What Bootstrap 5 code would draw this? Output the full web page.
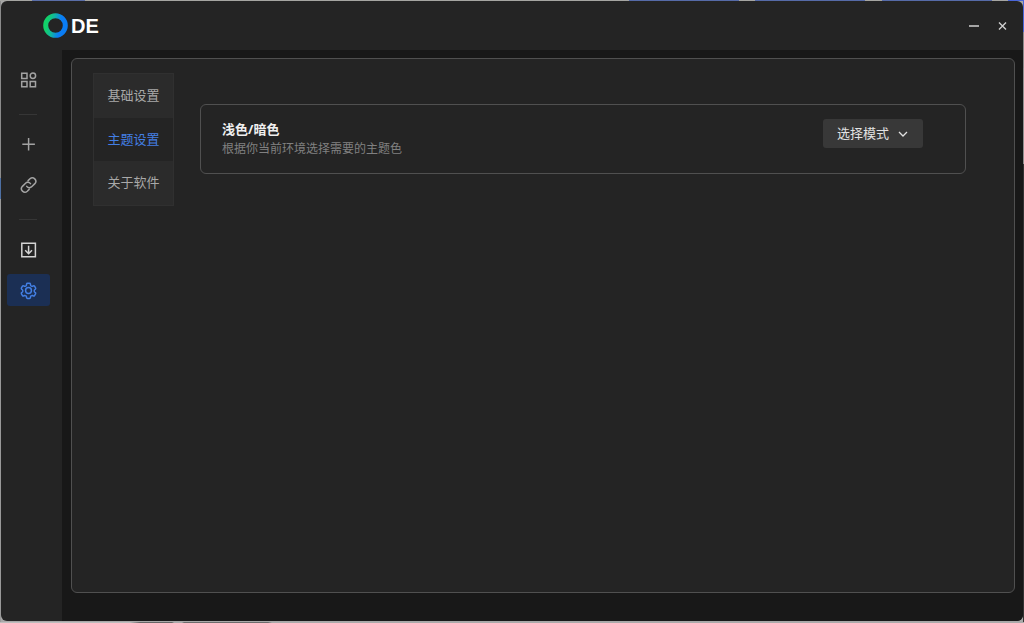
<!DOCTYPE html>
<html lang="zh-CN" data-bs-theme="dark">
<head>
<meta charset="utf-8">
<meta name="viewport" content="width=device-width, initial-scale=1">
<title>ODE 设置</title>
<link href="https://cdn.jsdelivr.net/npm/bootstrap@5.3.0/dist/css/bootstrap.min.css" rel="stylesheet">
<style>
  body {
    font-family: "Noto Sans", "Noto Sans CJK SC", sans-serif;
    font-size: 13px;
    line-height: 20px;
    padding: 1px 1px 2px;
    /* desktop that shows around the window */
    background:
      linear-gradient(90deg, #a5a5a2 0 32px, #5a6ea8 32px 85px, #a5a5a2 85px 629px, #566ba8 629px 739px, #a5a5a2 739px 755px, #566ba8 755px 865px, #a5a5a2 865px 882px, #566ba8 882px 992px, #a5a5a2 992px 1008px, #4a66d8 1008px) top / 100% 1px no-repeat,
      linear-gradient(90deg, #bdbdbd 0 130px, #666 140px 172px, #aaa 174px 182px, #6c6c6c 184px 268px, #aaa 272px) bottom / 100% 1px no-repeat,
      linear-gradient(#4a66d8 0 32px, #8a8a8a 32px 68px, #8f8f8f 68px 164px, #333 164px) right / 1px 100% no-repeat,
      linear-gradient(#8b8b8b 0 178px, #4d6fa3 178px 199px, #999 199px) left / 1px 100% no-repeat,
      #a8a8a8;
  }
  .app-window { background: #242424; border-radius: 6px; }
  .title-bar { height: 49px; padding: 0 14px 0 42px; }
  .brand { gap: 3px; color: #fff; font: 700 20px/24px "Liberation Sans", sans-serif; }
  .brand:hover { color: #fff; }
  .win-btn { width: 14px; height: 14px; color: #d0d0d0; }
  .side-bar { width: 61px; padding: 14px 0 0 6px; }
  .side-btn { width: 43px; height: 32px; color: #a3a3a3; border-radius: 3px; }
  .side-btn.strong { color: #d4d4d4; }
  .side-btn.active, .side-btn.active:hover { background: #1b2f54; color: #437fe4; }
  .side-rule { width: 18px; height: 1px; margin: 18px 12px 14px; background: #363636; opacity: 1; border: 0; }
  .stage { background: #181818; padding: 8px 8px 28px 9px; }
  .panel { background: #242424; border: 1px solid #505050; border-radius: 6px; padding: 14px 48px 14px 21px; gap: 26px; }
  .tab-list { width: 81px; border: 1px solid #303030; }
  .tab-list .nav-link { height: 44px; padding: 0 0 2px; color: #a9a9a9; background: #2b2b2b; border-radius: 0; }
  .tab-list .nav-link.active { height: 43px; color: #437fe4; background: #242424; }
  .tab-list .nav-link:not(.active):hover { color: #d0d0d0; }
  .setting { border: 1px solid #505050; border-radius: 6px; margin-top: 31px; padding: 14px 42px 14px 21px; }
  .setting h2 { font-size: 13px; line-height: 20px; color: #f0f0f0; }
  .setting p { font-size: 12px; line-height: 20px; color: #808080; }
  .mode-btn { width: 100px; height: 29px; gap: 8px; background: #383838; color: #e2e2e2; border-radius: 3px; font-size: 13px; }
  .mode-btn:hover { background: #404040; color: #fff; }
  svg { display: block; fill: none; stroke: currentColor; }
</style>
</head>
<body class="vh-100 overflow-hidden">
<div class="app-window h-100 d-flex flex-column overflow-hidden">
  <header class="title-bar d-flex align-items-center justify-content-between flex-shrink-0">
    <a href="#" class="brand d-flex align-items-center text-decoration-none">
      <svg width="25" height="25" viewBox="0 0 25 25" aria-hidden="true">
        <defs><linearGradient id="ring" x1="0" x2="1" y1="0.4" y2="0.6"><stop offset=".05" stop-color="#12d169"/><stop offset=".38" stop-color="#11b3a4"/><stop offset=".72" stop-color="#0a7df5"/></linearGradient></defs>
        <circle cx="12.5" cy="12.5" r="9.8" stroke="url(#ring)" stroke-width="5"/>
      </svg>
      <span>DE</span>
    </a>
    <div class="d-flex gap-3">
      <button class="win-btn btn p-0 border-0" aria-label="最小化"><svg width="14" height="14"><path d="M4 7h10" stroke-width="1.5"/></svg></button>
      <button class="win-btn btn p-0 border-0" aria-label="关闭"><svg width="14" height="14"><path d="M4 3.5l7 7M11 3.5l-7 7" stroke-width="1.4"/></svg></button>
    </div>
  </header>

  <div class="d-flex flex-grow-1">
    <nav class="side-bar flex-shrink-0" aria-label="主导航">
      <button class="side-btn btn p-0 border-0 d-flex align-items-center justify-content-center" aria-label="应用"><svg width="18" height="18" stroke-width="1.5"><path d="M1.7 2.2h5.3v5.3h-5.3zM1.7 10.5h5.3v5.3h-5.3zM10.2 10.5h5.3v5.3h-5.3z"/><circle cx="12.9" cy="4.8" r="2.7"/></svg></button>
      <hr class="side-rule">
      <button class="side-btn btn p-0 border-0 d-flex align-items-center justify-content-center" aria-label="新建"><svg width="18" height="18" stroke-width="1.5"><path d="M8.6 2v12.5M2.3 8.2h12.6"/></svg></button>
      <button class="side-btn btn p-0 border-0 d-flex align-items-center justify-content-center mt-2" aria-label="链接"><svg width="18" height="18" viewBox="0 0 24 24" stroke-width="2" stroke-linecap="round"><path d="M9 13.8a4.600 4.600 0 0 0 6.900.3l3.900-3.900a4.600 4.600 0 0 0-6.500-6.500l-2.500 2.500M14 10.200a4.600 4.600 0 0 0-6.900-.3l-3.900 3.900a4.600 4.600 0 0 0 6.500 6.500l2.500-2.500"/></svg></button>
      <hr class="side-rule">
      <button class="side-btn strong btn p-0 border-0 d-flex align-items-center justify-content-center" aria-label="下载"><svg width="18" height="18" stroke-width="1.5"><path d="M1.8 2.2h13.600v13.600H1.800zM8.600 4.800v8M5.200 9.300L8.600 12.700l3.400-3.400"/></svg></button>
      <button class="side-btn btn active p-0 border-0 d-flex align-items-center justify-content-center mt-2" aria-label="设置"><svg width="19" height="19" viewBox="0 0 24 24" stroke-width="1.900" stroke-linejoin="round"><path d="M9.600 3.900c.1-.6.600-1 1.100-1h2.600c.5 0 1 .4 1.100 1l.2 1.300c.1.400.300.700.600.900l.7.400c.3.200.7.200 1.100.1l1.200-.5c.5-.2 1.100 0 1.400.5l1.300 2.200c.3.500.2 1.100-.2 1.500l-1 .8c-.3.200-.5.600-.4 1v.8c0 .4.100.7.400 1l1 .8c.4.400.5 1 .2 1.500l-1.300 2.200c-.3.500-.9.700-1.400.5l-1.200-.5c-.4-.1-.8-.1-1.100.1l-.7.400c-.3.200-.5.500-.6.900l-.2 1.300c-.1.600-.6 1-1.100 1h-2.600c-.5 0-1-.4-1.100-1l-.2-1.300c-.1-.4-.3-.7-.6-.9l-.7-.4c-.3-.2-.7-.2-1.100-.1l-1.200.5c-.5.2-1.100 0-1.400-.5l-1.300-2.200c-.3-.5-.2-1.100.2-1.500l1-.8c.3-.3.4-.6.4-1v-.8c0-.4-.1-.8-.4-1l-1-.8c-.4-.4-.5-1-.2-1.500l1.300-2.200c.3-.5.9-.7 1.400-.5l1.200.5c.4.100.8.100 1.100-.1l.7-.4c.3-.2.5-.5.600-.9z"/><circle cx="12" cy="12" r="3.700"/></svg></button>
    </nav>

    <main class="stage flex-grow-1 d-flex">
      <section class="panel flex-grow-1 d-flex align-items-start">
        <nav class="tab-list nav nav-pills flex-column flex-shrink-0">
          <a class="nav-link d-flex align-items-center justify-content-center" href="#">基础设置</a>
          <a class="nav-link active d-flex align-items-center justify-content-center" href="#" aria-current="page">主题设置</a>
          <a class="nav-link d-flex align-items-center justify-content-center" href="#">关于软件</a>
        </nav>
        <div class="setting flex-grow-1 d-flex align-items-start justify-content-between">
          <div>
            <h2 class="fw-bold m-0">浅色/暗色</h2>
            <p class="m-0">根据你当前环境选择需要的主题色</p>
          </div>
          <button class="mode-btn btn border-0 p-0 d-flex align-items-center justify-content-center" aria-haspopup="true">选择模式<svg width="12" height="12" stroke-width="1.3"><path d="M2 4l4 4 4-4"/></svg></button>
        </div>
      </section>
    </main>
  </div>
</div>
<script src="https://cdn.jsdelivr.net/npm/bootstrap@5.3.0/dist/js/bootstrap.bundle.min.js"></script>
</body>
</html>
